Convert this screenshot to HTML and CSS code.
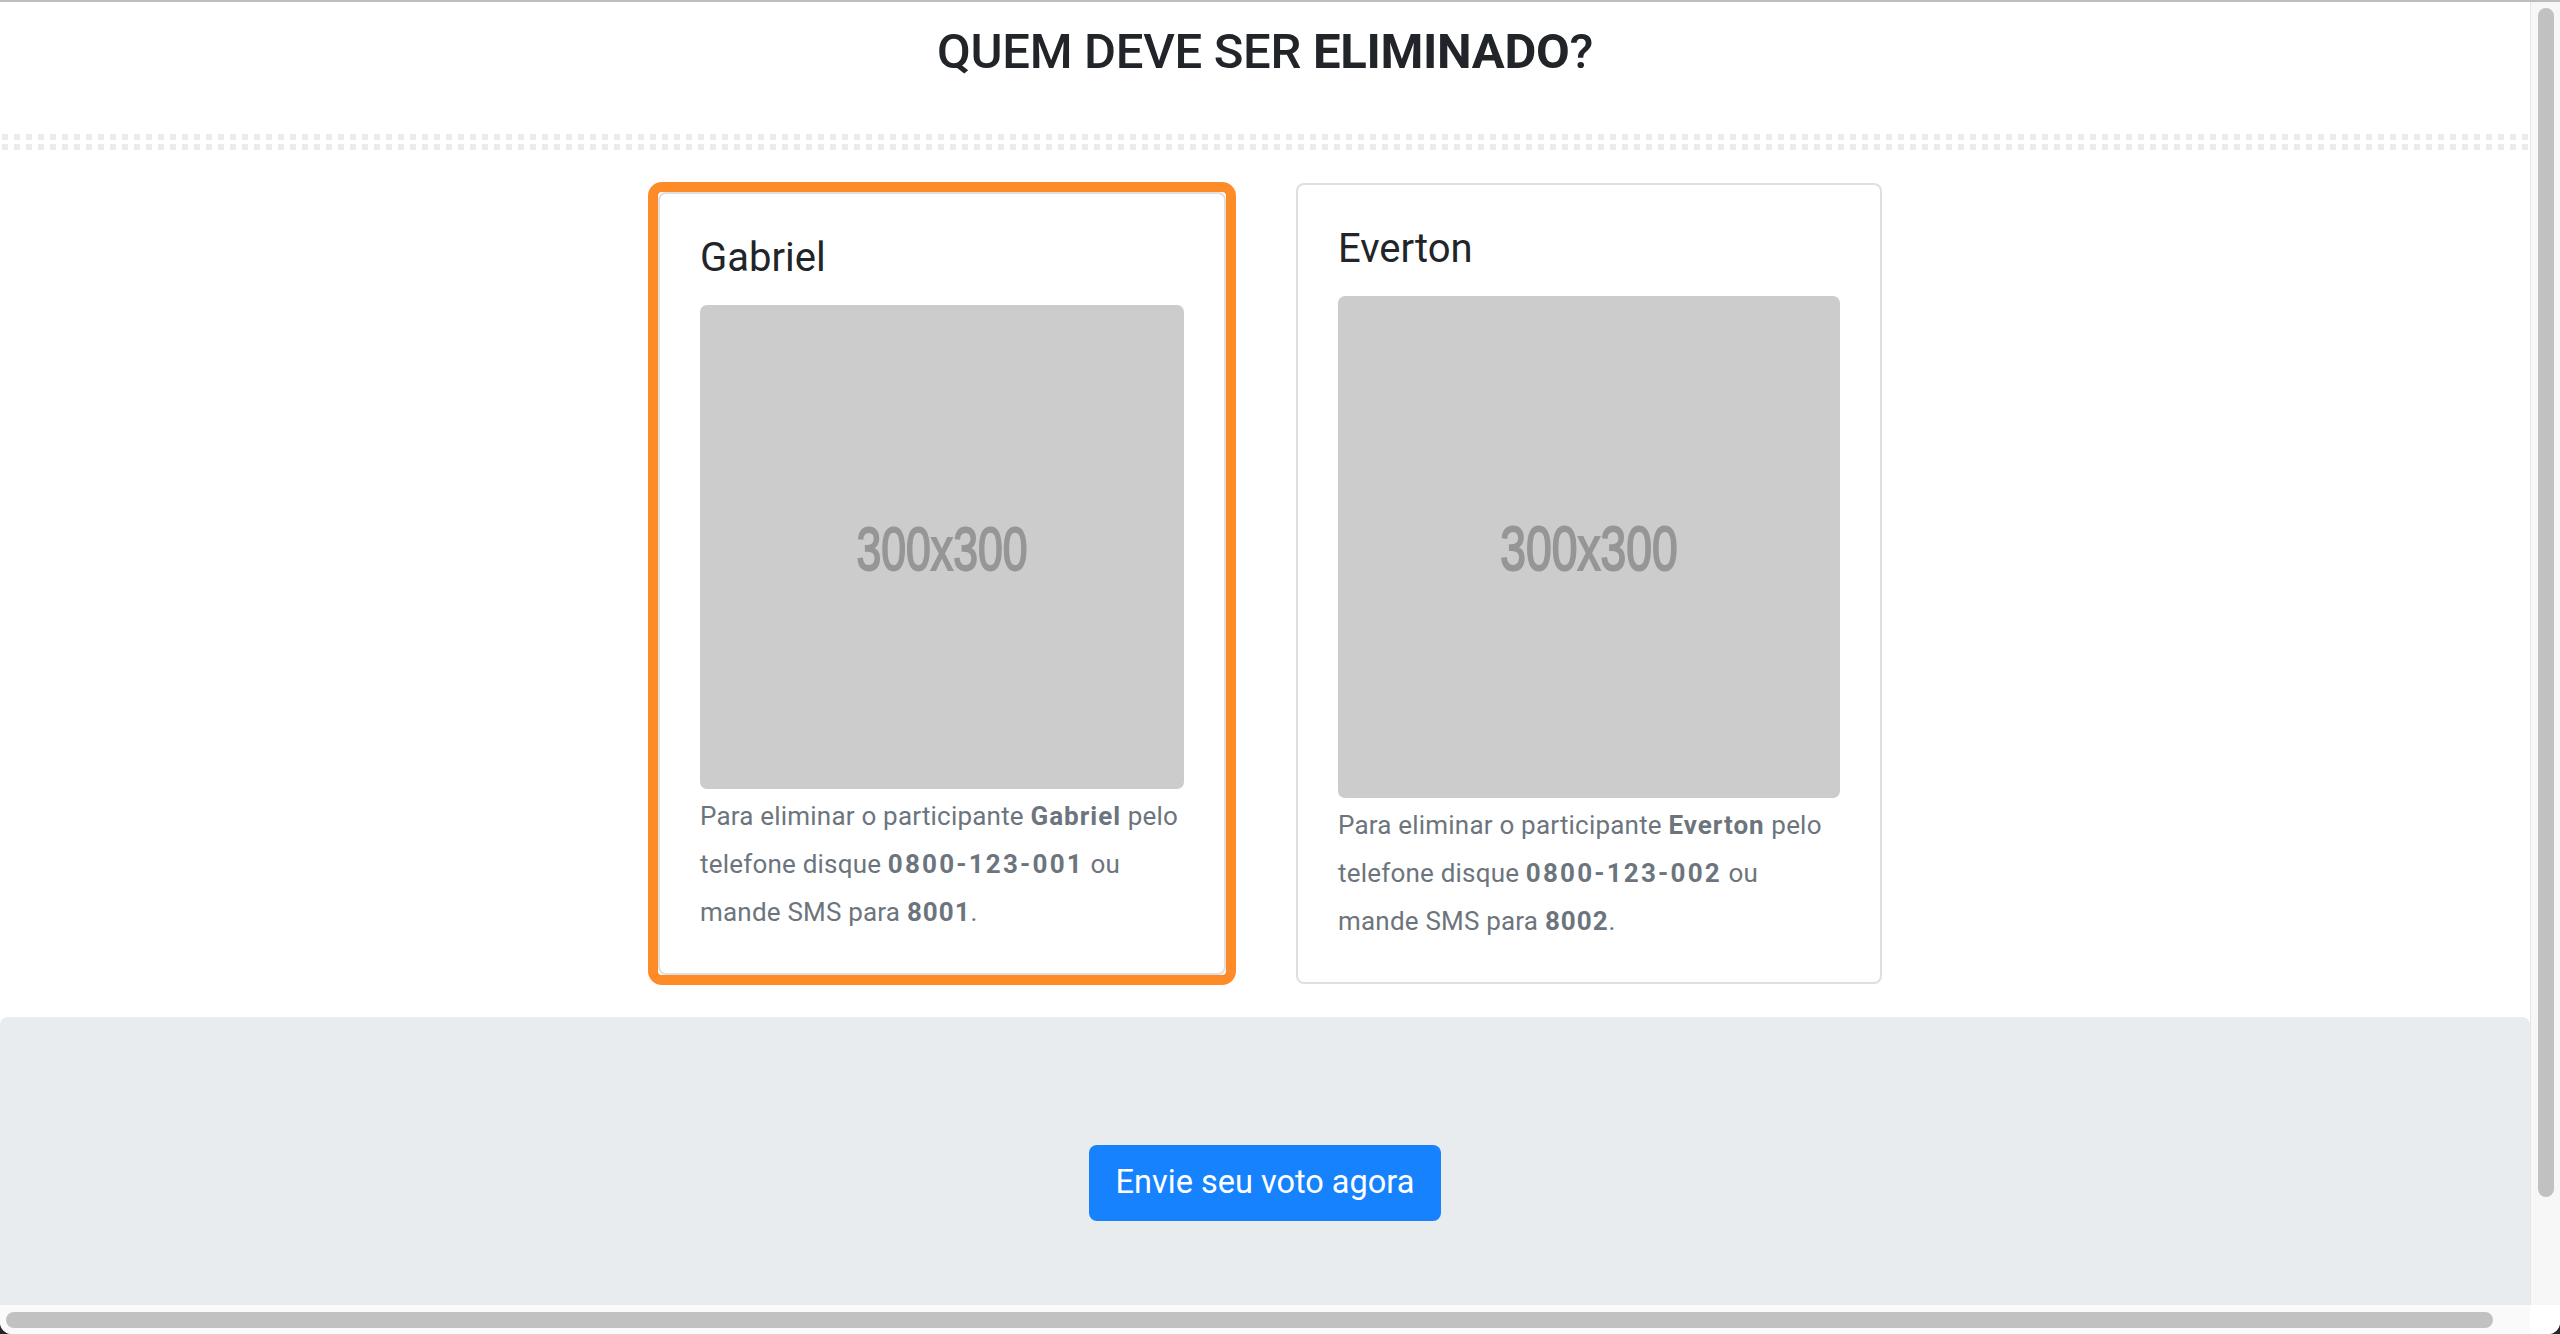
FILE: index.html
```html
<!DOCTYPE html>
<html lang="pt-BR">
<head>
<meta charset="utf-8">
<title>Quem deve ser eliminado?</title>
<link rel="stylesheet" href="styles.css">
</head>
<body>
<div class="screen">
  <div class="topline"></div>
  <div class="frame">
    <main class="page">
      <header class="header">
        <h2 class="title">QUEM DEVE SER <strong>ELIMINADO</strong>?</h2>
      </header>
      <div class="dots"></div>
      <section class="cards">
        <div class="pick">
          <article class="card">
            <h5 class="card-title">Gabriel</h5>
            <div class="ph">
              <svg viewBox="0 0 300 300" xmlns="http://www.w3.org/2000/svg" aria-label="300x300">
                <rect width="300" height="300" fill="#cccccc"/>
                <text x="150" y="164" text-anchor="middle" textLength="106" lengthAdjust="spacingAndGlyphs" class="ph-text">300x300</text>
              </svg>
            </div>
            <p class="card-text">Para eliminar o participante <strong>Gabriel</strong> pelo telefone disque <strong class="num">0800-123-001</strong> ou mande SMS para <strong>8001</strong>.</p>
          </article>
        </div>
        <article class="card card-plain">
          <h5 class="card-title">Everton</h5>
          <div class="ph">
            <svg viewBox="0 0 300 300" xmlns="http://www.w3.org/2000/svg" aria-label="300x300">
              <rect width="300" height="300" fill="#cccccc"/>
              <text x="150" y="164" text-anchor="middle" textLength="106" lengthAdjust="spacingAndGlyphs" class="ph-text">300x300</text>
            </svg>
          </div>
          <p class="card-text">Para eliminar o participante <strong>Everton</strong> pelo telefone disque <strong class="num">0800-123-002</strong> ou mande SMS para <strong>8002</strong>.</p>
        </article>
      </section>
      <section class="jumbo">
        <button class="btn" type="button">Envie seu voto agora</button>
      </section>
    </main>
    <div class="vscroll"><div class="vthumb"></div></div>
    <div class="hscroll"><div class="hthumb"></div></div>
    <div class="corner"></div>
  </div>
</div>
</body>
</html>
```
FILE: styles.css
```css
html, body {
  margin: 0;
  padding: 0;
  width: 2560px;
  height: 1334px;
  overflow: hidden;
  background: #2b2624;
}

.screen {
  width: 2560px;
  height: 1334px;
  display: flex;
  flex-direction: column;
  background: #ffffff;
  border-radius: 0 0 12px 12px;
  overflow: hidden;
  font-family: Roboto, "Liberation Sans", Arial, sans-serif;
}

.topline {
  height: 2px;
  background: #bdbdbd;
  flex: none;
}

.frame {
  flex: 1;
  min-height: 0;
  display: grid;
  grid-template-columns: 1fr 30px;
  grid-template-rows: 1fr 29px;
}

.page {
  min-width: 0;
  min-height: 0;
  overflow: hidden;
  background: #ffffff;
  display: flex;
  flex-direction: column;
}

.header {
  padding-top: 21px;
  text-align: center;
}

.title {
  margin: 0;
  font-size: 49px;
  line-height: 1.2;
  font-weight: 500;
  color: #212529;
  letter-spacing: -0.3px;
}

.title strong {
  font-weight: 700;
}

.dots {
  flex: none;
  margin-top: 52px;
  height: 16px;
  background-image:
    linear-gradient(to bottom, transparent 6px, #ffffff 6px),
    linear-gradient(to right, #e9ecef 6px, transparent 6px);
  background-size: 12px 10px, 12px 10px;
  background-position: 2px 0, 2px 0;
}

.cards {
  flex: none;
  margin-top: 33px;
  display: flex;
  justify-content: center;
  align-items: flex-start;
  gap: 60px;
}

.pick {
  width: 588px;
  box-sizing: border-box;
  border: 10px solid #fd8c28;
  border-radius: 14px;
  margin-top: -1px;
}

.card {
  box-sizing: border-box;
  border: 2px solid #dfdfdf;
  border-radius: 8px;
  padding: 40px 40px 37px;
  background: #ffffff;
}

.card-plain {
  width: 586px;
}

.card-title {
  margin: 0 0 23px;
  font-size: 40px;
  line-height: 48px;
  font-weight: 400;
  color: #212529;
}

.ph {
  border-radius: 7px;
  overflow: hidden;
}

.ph svg {
  display: block;
  width: 100%;
  height: auto;
}

.ph-text {
  font-family: "Liberation Sans", Arial, sans-serif;
  font-weight: 400;
  font-size: 38px;
  fill: #969696;
  stroke: #969696;
  stroke-width: 1.2px;
}

.card-text {
  margin: 3px 0 0;
  font-size: 26px;
  line-height: 48px;
  color: #6c757d;
  letter-spacing: 0.2px;
}

.card-text strong {
  font-weight: 700;
  letter-spacing: 1px;
}

.card-text .num {
  letter-spacing: 2.2px;
  white-space: nowrap;
}

.jumbo {
  flex: none;
  margin-top: 32px;
  background: #e9ecef;
  border-radius: 8px;
  padding: 128px 0 140px;
  text-align: center;
}

.btn {
  display: inline-block;
  border: none;
  background: #1682fe;
  color: #ffffff;
  font-family: Roboto, "Liberation Sans", Arial, sans-serif;
  font-size: 32.5px;
  line-height: 48.75px;
  font-weight: 400;
  padding: 13.6px 26.5px;
  border-radius: 8px;
}

.vscroll {
  background: #f7f7f7;
  border-left: 1px solid #e6e6e6;
  padding: 6px 6px 0 7px;
}

.vthumb {
  height: 1189px;
  background: #c1c1c1;
  border-radius: 8px;
}

.hscroll {
  background: #fafafa;
  padding: 7px 0 0 6px;
}

.hthumb {
  width: 2487px;
  height: 16px;
  background: #c1c1c1;
  border-radius: 8px;
}

.corner {
  background: #ffffff;
}
```
